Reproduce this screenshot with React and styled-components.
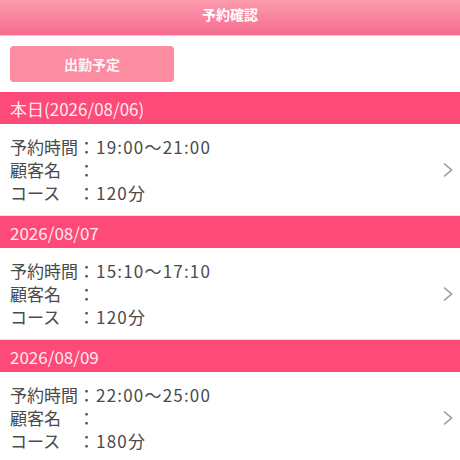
import React from 'react';
import styled, { createGlobalStyle } from 'styled-components';

const GlobalStyle = createGlobalStyle`
  html, body {
    margin: 0;
    padding: 0;
    background: #ffffff;
  }
  body {
    font-family: "Noto Sans CJK JP", "Noto Sans", sans-serif;
  }
`;

const Page = styled.div`
  width: 460px;
  height: 460px;
  overflow: hidden;
  background: #ffffff;
`;

const Header = styled.div`
  height: 36px;
  display: flex;
  justify-content: center;
  padding-top: 2px;
  box-sizing: border-box;
  background: linear-gradient(to bottom, #fc9cae, #f66b8e);
  color: #ffffff;
  font-size: 14px;
  font-weight: bold;
  line-height: 24px;
  border-bottom: 1px solid #f3c9d3;
`;

const Toolbar = styled.div`
  padding: 10px 10px;
  display: flex;
`;

const ShiftButton = styled.button`
  width: 164px;
  height: 36px;
  border: none;
  border-radius: 4px;
  background: #fb8ca1;
  color: #fff4f6;
  font-family: inherit;
  font-size: 14px;
  font-weight: bold;
`;

const DateBar = styled.div`
  height: 32px;
  display: flex;
  align-items: center;
  padding-left: 10px;
  background: #fe4a78;
  color: #ffe9ef;
  font-size: 17px;
`;

const Entry = styled.div`
  display: flex;
  align-items: center;
  justify-content: space-between;
  padding: 11px 6px 11px 10px;
  border-bottom: 1px solid #f1dde2;
`;

const Details = styled.div`
  display: grid;
  grid-template-columns: 68px 17px auto;
  font-size: 17px;
  line-height: 23px;
  color: #4a4a4a;
`;

const Label = styled.span`
  white-space: nowrap;
`;

const Colon = styled.span`
  text-align: center;
`;

const Value = styled.span`
  padding-left: 1px;
  letter-spacing: 1.2px;
`;

const Chevron = () => (
  <svg width="12" height="16" viewBox="0 0 12 16">
    <path d="M2 1.5 L9.5 8 L2 14.5" fill="none" stroke="#9a9a9a" strokeWidth="1.6" />
  </svg>
);

const reservations = [
  { date: '本日(2026/08/06)', time: '19:00～21:00', course: '120分' },
  { date: '2026/08/07', time: '15:10～17:10', course: '120分' },
  { date: '2026/08/09', time: '22:00～25:00', course: '180分' },
];

const App = () => (
  <Page>
    <GlobalStyle />
    <Header>予約確認</Header>
    <Toolbar>
      <ShiftButton>出勤予定</ShiftButton>
    </Toolbar>
    {reservations.map(r => (
      <div key={r.date}>
        <DateBar>{r.date}</DateBar>
        <Entry>
          <Details>
            <Label>予約時間</Label><Colon>：</Colon><Value>{r.time}</Value>
            <Label>顧客名</Label><Colon>：</Colon><Value></Value>
            <Label>コース</Label><Colon>：</Colon><Value>{r.course}</Value>
          </Details>
          <Chevron />
        </Entry>
      </div>
    ))}
  </Page>
);

export default App;
